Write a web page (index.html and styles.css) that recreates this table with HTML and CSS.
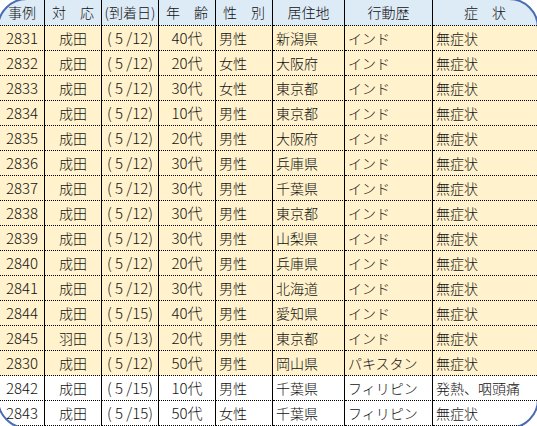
FILE: index.html
```html
<!DOCTYPE html>
<html lang="ja">
<head>
<meta charset="utf-8">
<link rel="stylesheet" href="styles.css">
</head>
<body>
<div class="sheet">
<table class="cases">
<thead>
<tr>
<th class="c1">事例</th><th class="c2">対　応</th><th class="c3">(到着日)</th><th class="c4">年　齢</th><th class="c5">性　別</th><th class="c6">居住地</th><th class="c7">行動歴</th><th class="c8">症　状</th>
</tr>
</thead>
<tbody>
<tr class="hl"><td class="ctr">2831</td><td class="ctr">成田</td><td class="ctr">( 5 /12)</td><td class="ctr">40代</td><td>男性</td><td>新潟県</td><td>インド</td><td>無症状</td></tr>
<tr class="hl"><td class="ctr">2832</td><td class="ctr">成田</td><td class="ctr">( 5 /12)</td><td class="ctr">20代</td><td>女性</td><td>大阪府</td><td>インド</td><td>無症状</td></tr>
<tr class="hl"><td class="ctr">2833</td><td class="ctr">成田</td><td class="ctr">( 5 /12)</td><td class="ctr">30代</td><td>女性</td><td>東京都</td><td>インド</td><td>無症状</td></tr>
<tr class="hl"><td class="ctr">2834</td><td class="ctr">成田</td><td class="ctr">( 5 /12)</td><td class="ctr">10代</td><td>男性</td><td>東京都</td><td>インド</td><td>無症状</td></tr>
<tr class="hl"><td class="ctr">2835</td><td class="ctr">成田</td><td class="ctr">( 5 /12)</td><td class="ctr">20代</td><td>男性</td><td>大阪府</td><td>インド</td><td>無症状</td></tr>
<tr class="hl"><td class="ctr">2836</td><td class="ctr">成田</td><td class="ctr">( 5 /12)</td><td class="ctr">30代</td><td>男性</td><td>兵庫県</td><td>インド</td><td>無症状</td></tr>
<tr class="hl"><td class="ctr">2837</td><td class="ctr">成田</td><td class="ctr">( 5 /12)</td><td class="ctr">30代</td><td>男性</td><td>千葉県</td><td>インド</td><td>無症状</td></tr>
<tr class="hl"><td class="ctr">2838</td><td class="ctr">成田</td><td class="ctr">( 5 /12)</td><td class="ctr">30代</td><td>男性</td><td>東京都</td><td>インド</td><td>無症状</td></tr>
<tr class="hl"><td class="ctr">2839</td><td class="ctr">成田</td><td class="ctr">( 5 /12)</td><td class="ctr">30代</td><td>男性</td><td>山梨県</td><td>インド</td><td>無症状</td></tr>
<tr class="hl"><td class="ctr">2840</td><td class="ctr">成田</td><td class="ctr">( 5 /12)</td><td class="ctr">20代</td><td>男性</td><td>兵庫県</td><td>インド</td><td>無症状</td></tr>
<tr class="hl"><td class="ctr">2841</td><td class="ctr">成田</td><td class="ctr">( 5 /12)</td><td class="ctr">30代</td><td>男性</td><td>北海道</td><td>インド</td><td>無症状</td></tr>
<tr class="hl"><td class="ctr">2844</td><td class="ctr">成田</td><td class="ctr">( 5 /15)</td><td class="ctr">40代</td><td>男性</td><td>愛知県</td><td>インド</td><td>無症状</td></tr>
<tr class="hl"><td class="ctr">2845</td><td class="ctr">羽田</td><td class="ctr">( 5 /13)</td><td class="ctr">20代</td><td>男性</td><td>東京都</td><td>インド</td><td>無症状</td></tr>
<tr class="hl"><td class="ctr">2830</td><td class="ctr">成田</td><td class="ctr">( 5 /12)</td><td class="ctr">50代</td><td>男性</td><td>岡山県</td><td>パキスタン</td><td>無症状</td></tr>
<tr><td class="ctr">2842</td><td class="ctr">成田</td><td class="ctr">( 5 /15)</td><td class="ctr">10代</td><td>男性</td><td>千葉県</td><td>フィリピン</td><td>発熱、咽頭痛</td></tr>
<tr><td class="ctr">2843</td><td class="ctr">成田</td><td class="ctr">( 5 /15)</td><td class="ctr">50代</td><td>女性</td><td>千葉県</td><td>フィリピン</td><td>無症状</td></tr>
</tbody>
</table>
<div class="frame"></div>
</div>
</body>
</html>
```

FILE: styles.css
```css
html, body {
  margin: 0;
  padding: 0;
  background: #fff;
}
body {
  font-family: "Noto Sans CJK JP", sans-serif;
  font-size: 14px;
  font-weight: 300;
  color: #111;
  overflow: hidden;
}
.sheet {
  position: relative;
  width: 537px;
  height: 426px;
  overflow: hidden;
}
.cases {
  border-collapse: separate;
  border-spacing: 0;
  table-layout: fixed;
  width: 537px;
}
.cases th,
.cases td {
  box-sizing: border-box;
  padding: 0 0 0 3px;
  height: 25px;
  line-height: 24px;
  border-right: 1px solid #000;
  border-bottom: 1px dotted #000;
  white-space: nowrap;
  overflow: hidden;
  text-align: left;
  font-weight: 300;
  vertical-align: middle;
}
.cases td.ctr {
  font-size: 15px;
  text-align: center;
  padding: 0;
}
.cases td.ctr:nth-child(2) {
  font-size: 14px;
}
.cases th {
  height: 26px;
  line-height: 25px;
  background: #ddebf7;
  text-align: center;
  padding: 0;
}
.cases th:last-child,
.cases td:last-child {
  border-right: none;
}
.cases tr.hl td {
  background: #fff2cc;
}
.c1 { width: 45px; }
.c2 { width: 57px; }
.c3 { width: 57px; }
.c4 { width: 57px; }
.c5 { width: 57px; }
.c6 { width: 72px; }
.c7 { width: 88px; }
.c8 { width: 104px; }
.frame {
  position: absolute;
  left: -3px;
  top: -2px;
  width: 542px;
  height: 431px;
  box-sizing: border-box;
  border: 2px solid #4a6cb0;
  border-radius: 30px;
  box-shadow: 0 0 0 40px #fff;
  pointer-events: none;
}
```
